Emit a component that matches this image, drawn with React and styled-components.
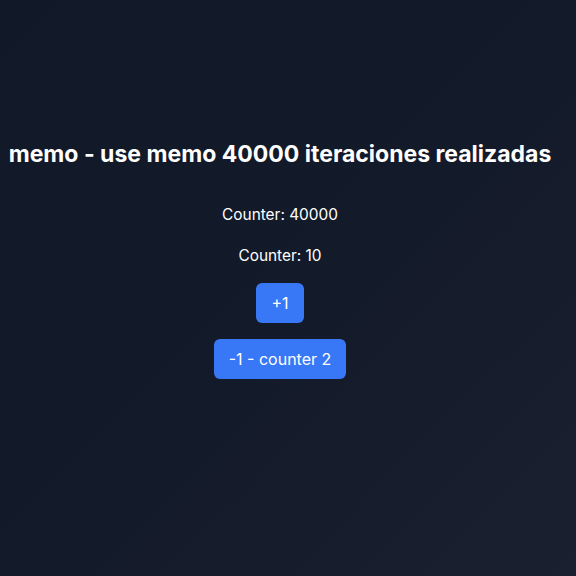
import { useState, useMemo } from "react";
import styled, { createGlobalStyle } from "styled-components";

const GlobalStyle = createGlobalStyle`
  html, body {
    margin: 0;
    padding: 0;
  }
  body {
    font-family: Inter, "Noto Sans", sans-serif;
    color: #fff;
    background: #111827;
  }
`;

const Page = styled.div`
  min-height: 100vh;
  width: 100%;
  background: linear-gradient(135deg, #111827 0%, #131a29 55%, #1b2030 100%);
`;

const Content = styled.div`
  width: 560px;
  display: flex;
  flex-direction: column;
  align-items: center;
  padding-top: 139px;
`;

const Title = styled.h1`
  margin: 0 0 36px;
  font-size: 23px;
  font-weight: 700;
  line-height: 30px;
  white-space: nowrap;
`;

const CounterText = styled.p`
  margin: 0 0 21px;
  font-size: 15.4px;
  line-height: 20px;

  &:last-of-type {
    margin-bottom: 17px;
  }
`;

const Button = styled.button`
  height: 40px;
  padding: 0 15px;
  margin-bottom: 16px;
  border: none;
  border-radius: 6px;
  background: #3877f6;
  color: #fff;
  font-family: Inter, "Noto Sans", sans-serif;
  font-size: 16px;
  cursor: pointer;

  &:hover {
    background: #2f6ae0;
  }
`;

const heavyCalc = (n) => {
  let total = 0;
  for (let i = 0; i < n; i++) total++;
  return total;
};

export default function App() {
  const [counter, setCounter] = useState(40000);
  const [counter2, setCounter2] = useState(10);
  const result = useMemo(() => heavyCalc(counter), [counter]);

  return (
    <Page>
      <GlobalStyle />
      <Content>
        <Title>memo - use memo {result} iteraciones realizadas</Title>
        <CounterText>Counter: {counter}</CounterText>
        <CounterText>Counter: {counter2}</CounterText>
        <Button onClick={() => setCounter(counter + 1)}>+1</Button>
        <Button onClick={() => setCounter2(counter2 - 1)}>-1 - counter 2</Button>
      </Content>
    </Page>
  );
}
